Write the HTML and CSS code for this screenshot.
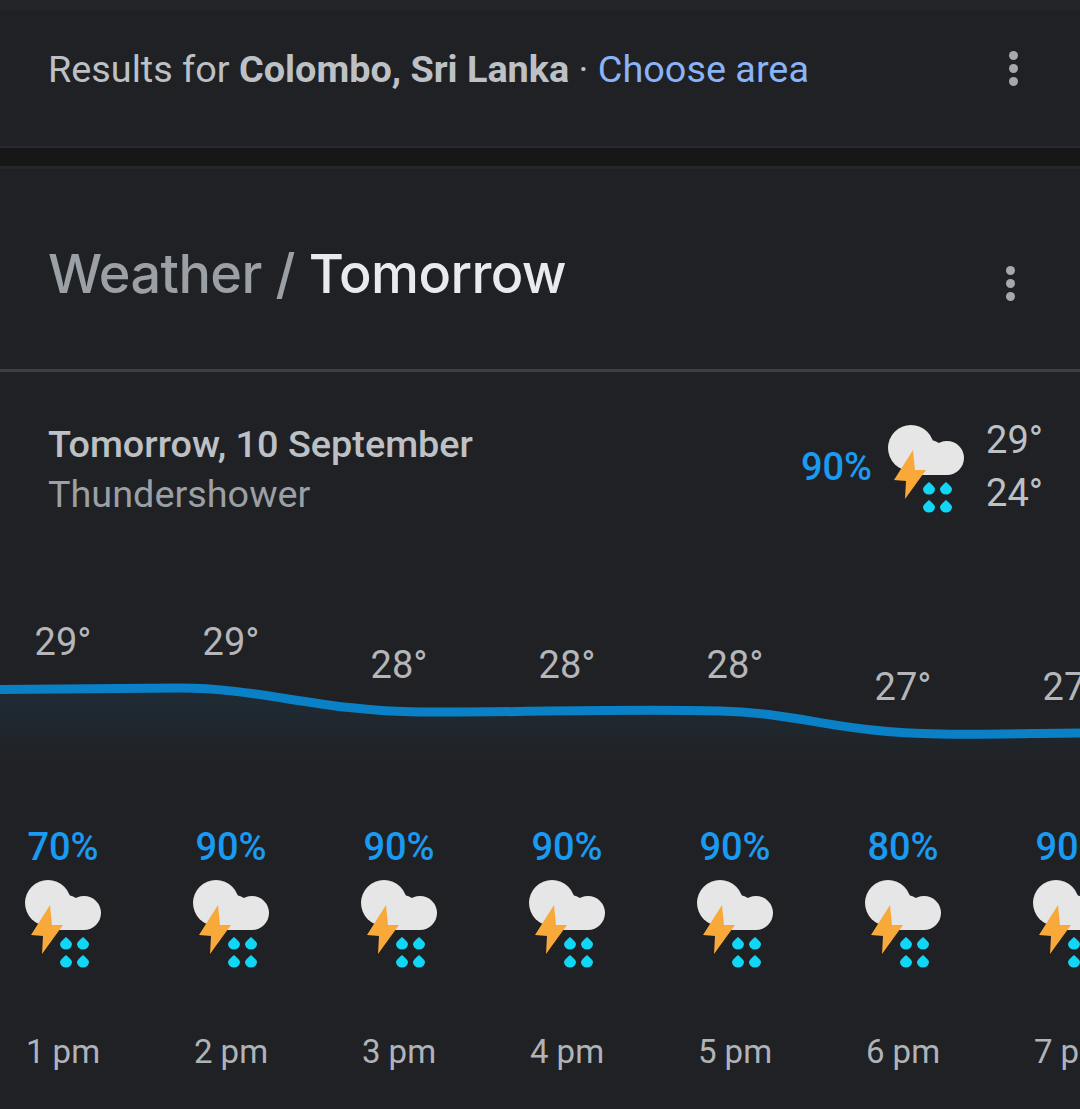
FILE: index.html
```html
<!DOCTYPE html>
<html lang="en">
<head>
  <meta charset="UTF-8">
  <title>Weather - Tomorrow</title>
  <link rel="stylesheet" href="styles.css">
</head>
<body>
  <svg class="defs" width="0" height="0">
    <symbol id="thunder" viewBox="7 14 80 90">
      <g fill="#e6e6e6">
        <circle cx="32" cy="37" r="23"/>
        <circle cx="50" cy="46" r="17"/>
        <circle cx="68" cy="47" r="17"/>
        <rect x="32" y="46" width="36" height="18"/>
      </g>
      <path fill="#f9a83a" d="M34 39 L15 69 L27 70 L26 88 L47 59 L36 59 Z"/>
      <g fill="#12d6f5">
        <path d="M50 71 q-6 5 -6 7 a6 5.500 0 0 0 12 0 q0 -2 -6 -7 Z"/>
        <path d="M67 71 q-6 5 -6 7 a6 5.500 0 0 0 12 0 q0 -2 -6 -7 Z"/>
        <path d="M50 89 q-6 5 -6 7 a6 5.500 0 0 0 12 0 q0 -2 -6 -7 Z"/>
        <path d="M67 89 q-6 5 -6 7 a6 5.500 0 0 0 12 0 q0 -2 -6 -7 Z"/>
      </g>
    </symbol>
  </svg>

  <div class="top-strip"></div>
  <div class="results-card">
    <div class="results-text">Results for <b>Colombo, Sri Lanka</b> · <a class="link">Choose area</a></div>
    <div class="dots"><span></span><span></span><span></span></div>
  </div>
  <div class="gap"></div>

  <div class="weather-card">
    <div class="weather-head">
      <h2><span class="crumb">Weather /</span> Tomorrow</h2>
      <div class="dots"><span></span><span></span><span></span></div>
    </div>

    <div class="day-row">
      <div>
        <div class="day-name">Tomorrow, 10 September</div>
        <div class="day-desc">Thundershower</div>
      </div>
      <div class="day-right">
        <div class="pct day-pct">90%</div>
        <svg class="icon"><use href="#thunder"/></svg>
        <div class="hi-lo"><div>29°</div><div>24°</div></div>
      </div>
    </div>

    <div class="temps">
      <div class="temp t29">29°</div>
      <div class="temp t29">29°</div>
      <div class="temp t28">28°</div>
      <div class="temp t28">28°</div>
      <div class="temp t28">28°</div>
      <div class="temp t27">27°</div>
      <div class="temp t27">27°</div>
    </div>
    <svg class="chart" width="1080" height="90" viewBox="0 0 1080 90">
      <defs>
        <linearGradient id="fade" x1="0" y1="0" x2="0" y2="1">
          <stop offset="0" stop-color="#1f2c36"/>
          <stop offset="1" stop-color="#202124"/>
        </linearGradient>
      </defs>
      <path fill="url(#fade)" d="M0 10.500 C60 10.500 120 9 180 9 C260 9 320 32 420 33 C520 34 620 29 720 32 C800 34 840 54 940 55 C990 56 1040 54 1080 54 V90 H0 Z"/>
      <path fill="none" stroke="#0a80c6" stroke-width="9" d="M0 10.500 C60 10.500 120 9 180 9 C260 9 320 32 420 33 C520 34 620 29 720 32 C800 34 840 54 940 55 C990 56 1040 54 1080 54"/>
    </svg>

    <div class="hours">
      <div class="hour"><div class="pct">70%</div><svg class="icon"><use href="#thunder"/></svg><div class="time">1 pm</div></div>
      <div class="hour"><div class="pct">90%</div><svg class="icon"><use href="#thunder"/></svg><div class="time">2 pm</div></div>
      <div class="hour"><div class="pct">90%</div><svg class="icon"><use href="#thunder"/></svg><div class="time">3 pm</div></div>
      <div class="hour"><div class="pct">90%</div><svg class="icon"><use href="#thunder"/></svg><div class="time">4 pm</div></div>
      <div class="hour"><div class="pct">90%</div><svg class="icon"><use href="#thunder"/></svg><div class="time">5 pm</div></div>
      <div class="hour"><div class="pct">80%</div><svg class="icon"><use href="#thunder"/></svg><div class="time">6 pm</div></div>
      <div class="hour"><div class="pct">90%</div><svg class="icon"><use href="#thunder"/></svg><div class="time">7 pm</div></div>
    </div>
  </div>
</body>
</html>
```

FILE: styles.css
```css
* {
  box-sizing: border-box;
}

html, body {
  height: 100%;
}

body {
  margin: 0;
  background: #202124;
  color: #bdc1c6;
  font-family: 'Roboto', sans-serif;
  font-size: 38px;
  overflow: hidden;
}

.defs {
  display: block;
}

.top-strip {
  height: 10px;
  background: #242529;
}

.results-card {
  height: 138px;
  padding: 0 62px 19px 48px;
  border-bottom: 2px solid #2a2b30;
  display: flex;
  justify-content: space-between;
  align-items: center;
}

.results-text {
  font-size: 37.8px;
  color: #bdc1c6;
  white-space: nowrap;
}

.results-text b {
  font-weight: 700;
}

.link {
  color: #8ab4f8;
}

.dots {
  display: flex;
  flex-direction: column;
  gap: 4px;
}

.dots span {
  width: 9px;
  height: 9px;
  border-radius: 50%;
  background: #a5a8ad;
}

.gap {
  height: 21px;
  background: #171717;
  border-bottom: 3px solid #26272b;
}

.weather-head {
  height: 203px;
  padding: 8px 65px 0 48px;
  border-bottom: 3px solid #3c4043;
  display: flex;
  justify-content: space-between;
  align-items: center;
}

.weather-head .dots {
  margin-top: 20px;
}

h2 {
  margin: 0;
  font-family: 'Inter', sans-serif;
  font-size: 54px;
  font-weight: 500;
  letter-spacing: -0.6px;
  color: #e8eaed;
  white-space: nowrap;
}

.crumb {
  color: #9aa0a6;
}

.day-row {
  padding: 47px 37px 0 48px;
  display: flex;
  justify-content: space-between;
  align-items: flex-start;
}

.day-name {
  font-size: 37.8px;
  font-weight: 500;
  line-height: 50px;
}

.day-desc {
  font-size: 37.8px;
  color: #9aa0a6;
  line-height: 50px;
}

.day-right {
  display: flex;
  align-items: center;
  gap: 16px;
  margin-top: -5px;
}

.day-right .icon {
  margin: 6px 0 0 -2px;
}

.pct {
  color: #1a9af0;
  font-weight: 500;
}

.icon {
  width: 80px;
  height: 90px;
  display: block;
  filter: blur(0.6px);
}

.hi-lo {
  line-height: 53px;
  margin-left: 4px;
}

.temps {
  height: 85px;
  margin: 102px 0 0 -21px;
  display: flex;
  align-items: flex-start;
}

.temp {
  flex: 0 0 168px;
  text-align: center;
  line-height: 40px;
  color: #b4b6ba;
}

.t28 {
  padding-top: 23px;
}

.t27 {
  padding-top: 45px;
}

.chart {
  display: block;
  margin-top: -28px;
}

.hours {
  margin: 58px 0 0 -21px;
  display: flex;
}

.hour {
  flex: 0 0 168px;
  display: flex;
  flex-direction: column;
  align-items: center;
}

.hour .pct {
  line-height: 40px;
}

.hour .icon {
  margin-top: 13px;
}

.time {
  margin-top: 62px;
  font-size: 33px;
  line-height: 40px;
  color: #b0b3b8;
  white-space: nowrap;
}
```
